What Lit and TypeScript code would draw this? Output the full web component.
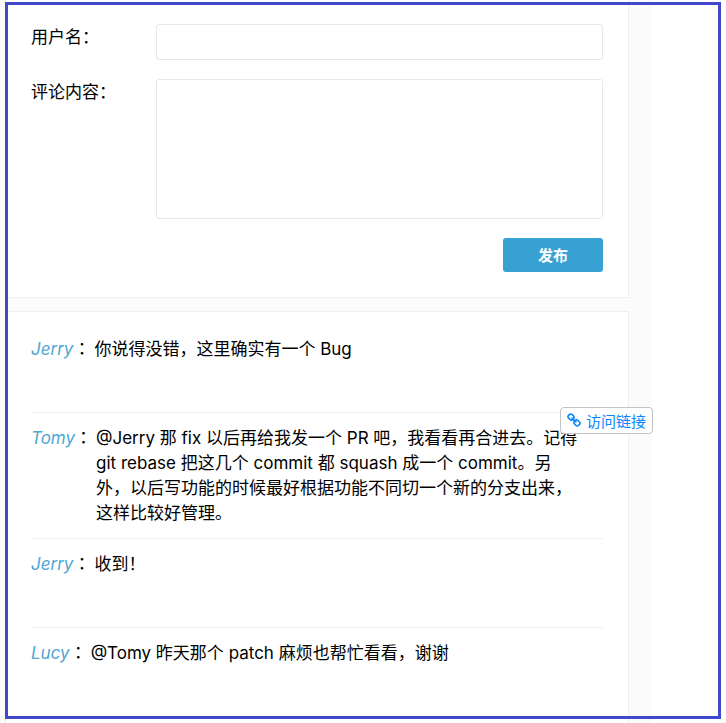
import { LitElement, html, css, nothing } from "lit";
import { customElement } from "lit/decorators.js";

interface Comment {
  author: string;
  text: string;
  link?: boolean;
}

const comments: Comment[] = [
  { author: "Jerry", text: "你说得没错，这里确实有一个 Bug" },
  {
    author: "Tomy",
    text: "@Jerry 那 fix 以后再给我发一个 PR 吧，我看看再合进去。记得 git rebase 把这几个 commit 都 squash 成一个 commit。另外，以后写功能的时候最好根据功能不同切一个新的分支出来，这样比较好管理。",
    link: true,
  },
  { author: "Jerry", text: "收到！" },
  { author: "Lucy", text: "@Tomy 昨天那个 patch 麻烦也帮忙看看，谢谢" },
];

@customElement("app-root")
export class AppRoot extends LitElement {
  static styles = css`
    :host {
      display: block;
      position: relative;
      height: 100vh;
      overflow: hidden;
      background: #fff;
      color: #000;
      font: 17px/25px Inter, "Noto Sans CJK SC", sans-serif;
      text-spacing-trim: space-all;
    }
    * {
      box-sizing: border-box;
    }
    .frame {
      position: absolute;
      inset: 2px 5px 4px;
      border: 3px solid #4048cc;
      pointer-events: none;
    }
    .panel {
      display: flex;
      flex-direction: column;
      gap: 13px;
      min-height: 100vh;
      margin-right: 74px;
      padding: 0 23px 0 5px;
      background: #fbfbfb;
    }
    .card {
      background: #fff;
      border: 1px solid #efefef;
      padding: 23px 25px 25px;
    }
    .form {
      display: grid;
      grid-template-columns: 125px 1fr;
      row-gap: 19px;
      border-top-color: #fff;
    }
    .label {
      line-height: 27px;
    }
    .field {
      display: block;
      width: 100%;
      height: 36px;
      margin: 0;
      padding: 4px 8px;
      border: 1px solid #e6e6e6;
      border-radius: 3px;
      background: #fff;
      font: inherit;
      resize: none;
      outline: none;
    }
    .area {
      height: 140px;
    }
    .submit {
      grid-column: 2;
      justify-self: end;
      width: 100px;
      height: 34px;
      padding: 0;
      border: 0;
      border-radius: 3px;
      background: #38a1d3;
      color: #fff;
      font: bold 15px/34px "Noto Sans CJK SC", sans-serif;
    }
    .list {
      flex: 1;
      margin: 0;
      padding: 12px 25px 0;
      border-bottom: 0;
      list-style: none;
    }
    .comment {
      display: flex;
      position: relative;
      min-height: 89px;
      padding: 13px 0 12px;
      border-bottom: 1px solid #f0f0f0;
    }
    .author {
      flex: none;
      color: #50a5d3;
      font-style: italic;
    }
    .colon {
      flex: none;
      margin-right: 4px;
      font-family: Inter, "Noto Sans CJK TC", sans-serif;
    }
    .text {
      margin: 0;
      padding-right: 20px;
    }
    .visit {
      position: absolute;
      top: -6px;
      right: -50px;
      display: flex;
      align-items: center;
      gap: 4px;
      height: 27px;
      padding: 0 6px;
      border: 1px solid #c4c4c4;
      border-radius: 4px;
      background: #fff;
      color: #0a84ff;
      font: 15px/25px "Noto Sans CJK SC", sans-serif;
      white-space: nowrap;
      text-decoration: none;
    }
    .icon {
      width: 15px;
      height: 15px;
      fill: currentColor;
    }
  `;

  private renderLink() {
    return html`<a class="visit" href="#">
      <svg class="icon" viewBox="0 0 1792 1792" aria-hidden="true">
        <path
          d="M1456 1216q0-40-28-68l-208-208q-28-28-68-28-42 0-72 32 3 3 19 18.5t21.5 21.5 15 19 13 25.5 3.5 27.5q0 40-28 68t-68 28q-15 0-27.5-3.5t-25.5-13-19-15-21.5-21.5-18.5-19q-33 31-33 73 0 40 28 68l206 207q27 27 68 27 40 0 68-26l147-146q28-28 28-67zm-703-705q0-40-28-68l-206-207q-28-28-68-28-39 0-68 27l-147 146q-28 28-28 67 0 40 28 68l208 208q27 27 68 27 42 0 72-31-3-3-19-18.5t-21.5-21.5-15-19-13-25.5-3.5-27.5q0-40 28-68t68-28q15 0 27.5 3.5t25.5 13 19 15 21.5 21.5 18.5 19q33-31 33-73zm895 705q0 120-85 203l-147 146q-83 83-203 83-121 0-204-85l-206-207q-83-83-83-203 0-123 88-209l-88-88q-86 88-208 88-120 0-204-84l-208-208q-84-84-84-204t85-203l147-146q83-83 203-83 121 0 204 85l206 207q83 83 83 203 0 123-88 209l88 88q86-88 208-88 120 0 204 84l208 208q84 84 84 204z"
        ></path>
      </svg>
      <span>访问链接</span>
    </a>`;
  }

  render() {
    return html`
      <main class="panel" lang="zh-CN">
        <form class="card form" @submit=${(e: Event) => e.preventDefault()}>
          <label class="label" for="user">用户名：</label>
          <input class="field" id="user" type="text" />
          <label class="label" for="content">评论内容：</label>
          <textarea class="field area" id="content"></textarea>
          <button class="submit" type="submit">发布</button>
        </form>
        <ul class="card list">
          ${comments.map(
            (c) => html`<li class="comment">
              <span class="author">${c.author}</span>
              <span class="colon" lang="zh-TW">：</span>
              <p class="text">${c.text}</p>
              ${c.link ? this.renderLink() : nothing}
            </li>`
          )}
        </ul>
      </main>
      <div class="frame"></div>
    `;
  }
}
